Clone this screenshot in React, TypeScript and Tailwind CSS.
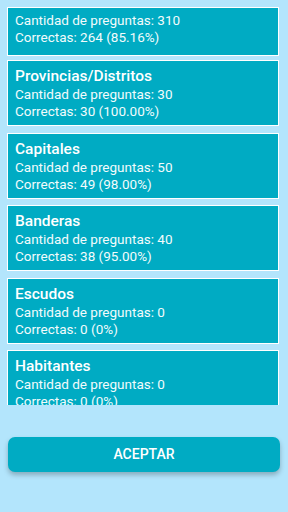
import React from "react";

const cards = [
  { title: "Provincias/Distritos", q: 30, c: "30 (100.00%)" },
  { title: "Capitales", q: 50, c: "49 (98.00%)" },
  { title: "Banderas", q: 40, c: "38 (95.00%)" },
  { title: "Escudos", q: 0, c: "0 (0%)" },
  { title: "Habitantes", q: 0, c: "0 (0%)" },
];

export default function App() {
  return (
    <div
      className="w-[288px] h-[512px] bg-[#b3e5fc] flex flex-col overflow-hidden"
      style={{ fontFamily: "Roboto, 'Noto Sans', sans-serif" }}
    >
      <div className="h-[405px] overflow-hidden pt-[7px] pl-[7px] pr-[9px] flex flex-col">
        <div className="border border-white bg-[#00abc3] px-[7px] pt-[4px] pb-[9px] text-[13.5px] leading-[17px] text-[#f2fbfc] mb-[4px] shrink-0">
          <div>Cantidad de preguntas: 310</div>
          <div>Correctas: 264 (85.16%)</div>
        </div>
        <div className="flex flex-col gap-[6.5px]">
          {cards.map((c) => (
            <div
              key={c.title}
              className="border border-white bg-[#00abc3] px-[7px] pt-[5px] pb-[5px] text-[#f2fbfc] shrink-0"
            >
              <div className="text-[15.5px] leading-[20px] font-medium text-white">{c.title}</div>
              <div className="text-[13.5px] leading-[17px]">Cantidad de preguntas: {c.q}</div>
              <div className="text-[13.5px] leading-[17px]">Correctas: {c.c}</div>
            </div>
          ))}
        </div>
      </div>
      <div className="px-[8px] pt-[32px]">
        <button className="w-full h-[35px] rounded-[7px] bg-[#00abc3] text-white text-[14px] font-medium shadow-[0_3px_5px_rgba(0,0,0,0.25)]">
          ACEPTAR
        </button>
      </div>
    </div>
  );
}
